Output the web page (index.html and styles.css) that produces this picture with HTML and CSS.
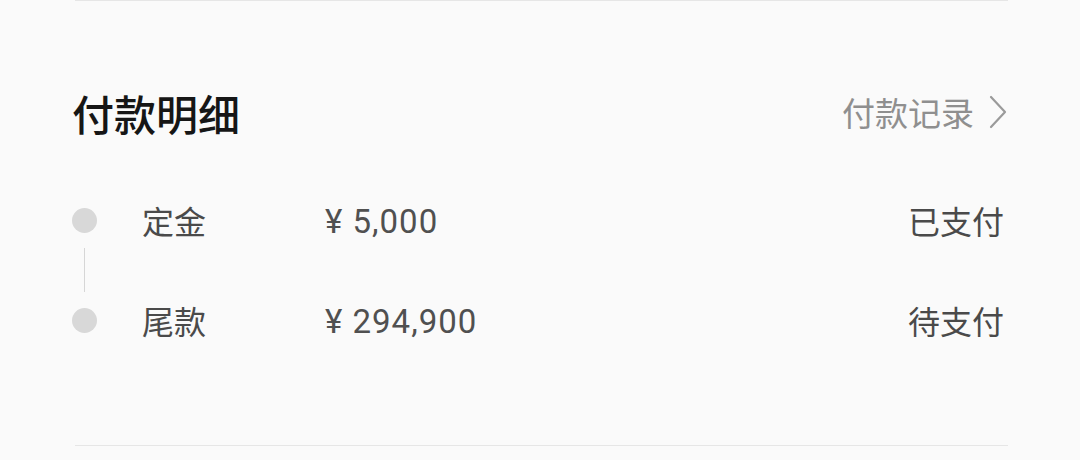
FILE: index.html
```html
<!DOCTYPE html>
<html lang="zh-CN">
<head>
  <meta charset="UTF-8">
  <meta name="viewport" content="width=device-width, initial-scale=1.0">
  <title>付款明细</title>
  <link rel="stylesheet" href="styles.css">
</head>
<body>
  <div class="card">
    <div class="divider"></div>
    <div class="header">
      <h2 class="title">付款明细</h2>
      <a class="record-link" href="#">
        <span>付款记录</span>
        <svg class="chevron" width="20" height="36" viewBox="0 0 20 36">
          <polyline points="3,3 17,18 3,33" fill="none" stroke="#9a9a9a" stroke-width="2.2" stroke-linecap="round" stroke-linejoin="round"/>
        </svg>
      </a>
    </div>
    <ul class="steps">
      <li class="step">
        <span class="dot"></span>
        <span class="label">定金</span>
        <span class="amount">¥ 5,000</span>
        <span class="status">已支付</span>
      </li>
      <li class="step">
        <span class="dot"></span>
        <span class="label">尾款</span>
        <span class="amount">¥ 294,900</span>
        <span class="status">待支付</span>
      </li>
    </ul>
    <div class="divider"></div>
  </div>
</body>
</html>
```

FILE: styles.css
```css
body {
  margin: 0;
  background-color: #fafafa;
  font-family: "Noto Sans CJK SC", "Noto Sans", sans-serif;
  color: #4a4a4a;
}

.card {
  padding: 0 72px;
}

.divider {
  height: 1px;
  margin-left: 3px;
  background-color: #e6e6e6;
}

.header {
  display: flex;
  justify-content: space-between;
  align-items: center;
  height: 60px;
  margin-top: 81px;
}

.title {
  margin: 0;
  font-size: 42px;
  font-weight: 500;
  color: #161616;
}

.record-link {
  display: flex;
  align-items: center;
  gap: 14px;
  font-size: 33px;
  color: #8f8f8f;
  text-decoration: none;
}

.steps {
  list-style: none;
  margin: 28px 0 75px;
  padding: 0;
}

.step {
  display: flex;
  align-items: center;
  height: 100px;
  font-size: 32px;
}

.dot {
  position: relative;
  flex: none;
  width: 25px;
  height: 25px;
  border-radius: 50%;
  background-color: #d8d8d8;
  margin-right: 45px;
}

.step:not(:last-child) .dot::after {
  content: "";
  position: absolute;
  left: 12px;
  top: 40px;
  width: 1px;
  height: 44px;
  background-color: #d6d6d6;
}

.label {
  width: 183px;
}

.amount {
  flex: 1;
  padding-top: 3px;
  font-family: Roboto, "Noto Sans CJK SC", sans-serif;
  font-size: 33px;
  letter-spacing: 1px;
  color: #505050;
}

.status {
  margin-right: 4px;
}
```
